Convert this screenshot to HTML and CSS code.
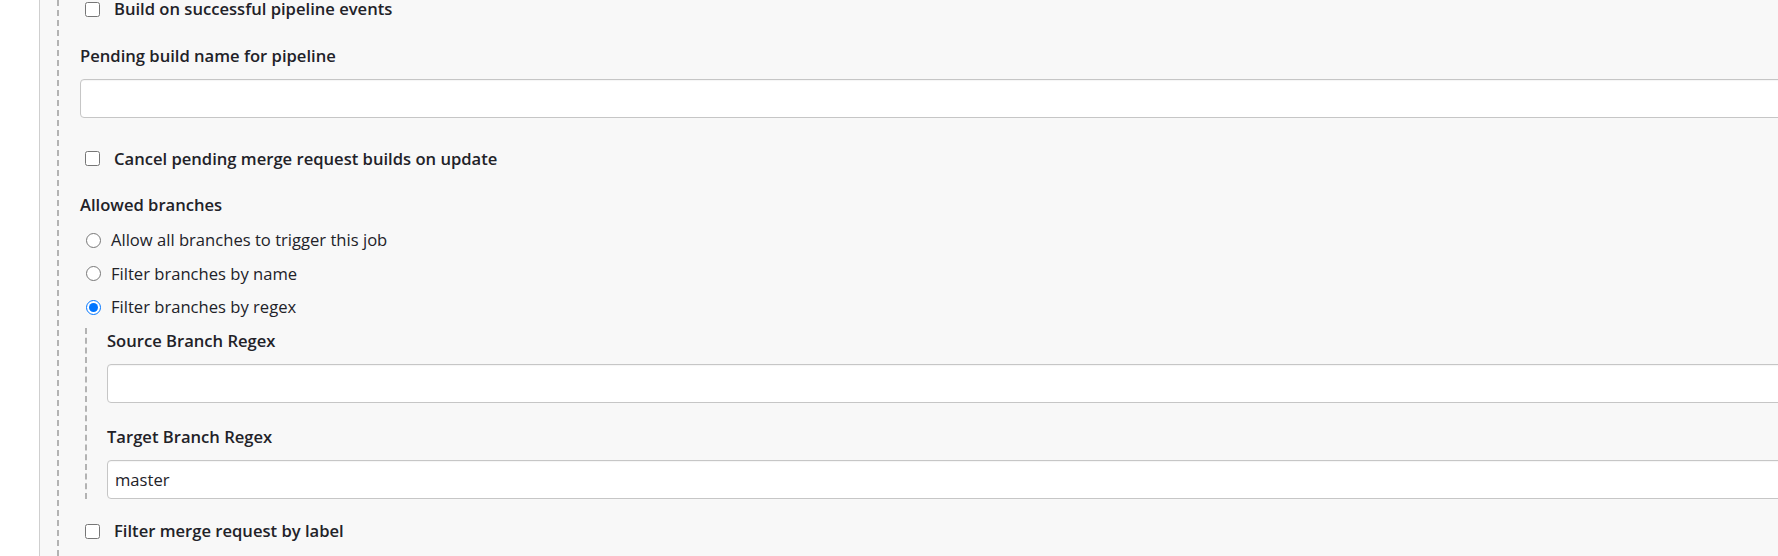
FILE: index.html
```html
<!DOCTYPE html>
<html lang="en">
<head>
<meta charset="utf-8">
<title>Build triggers</title>
<link rel="stylesheet" href="styles.css">
</head>
<body>
<div class="layout">
  <div class="gutter"></div>
  <main class="panel">
    <div class="section">
      <label class="check-row check-row-first">
        <input type="checkbox" class="check">
        <span class="check-text">Build on successful pipeline events</span>
      </label>

      <div class="field field-first">
        <div class="field-label">Pending build name for pipeline</div>
        <input type="text" class="text-input" value="">
      </div>

      <label class="check-row check-row-spaced">
        <input type="checkbox" class="check">
        <span class="check-text">Cancel pending merge request builds on update</span>
      </label>

      <div class="group">
        <div class="field-label group-label">Allowed branches</div>
        <div class="radios">
          <label class="radio-row">
            <input type="radio" name="branches" class="radio">
            <span>Allow all branches to trigger this job</span>
          </label>
          <label class="radio-row">
            <input type="radio" name="branches" class="radio">
            <span>Filter branches by name</span>
          </label>
          <label class="radio-row">
            <input type="radio" name="branches" class="radio" checked>
            <span>Filter branches by regex</span>
          </label>
        </div>
        <div class="nested">
          <div class="field">
            <div class="field-label">Source Branch Regex</div>
            <input type="text" class="text-input" value="">
          </div>
          <div class="field field-next">
            <div class="field-label">Target Branch Regex</div>
            <input type="text" class="text-input" value="master">
          </div>
        </div>
      </div>

      <label class="check-row check-row-last">
        <input type="checkbox" class="check">
        <span class="check-text">Filter merge request by label</span>
      </label>
    </div>
  </main>
</div>
</body>
</html>
```

FILE: styles.css
```css
html, body {
  margin: 0;
  padding: 0;
  background: #ffffff;
  overflow: hidden;
}

body {
  font-family: "Open Sans", "Noto Sans", "Liberation Sans", sans-serif;
  font-size: 16.6px;
  line-height: 24px;
  color: #222228;
  height: 556px;
}

.layout {
  display: flex;
  height: 556px;
}

.gutter {
  width: 39px;
  flex: none;
  background: #ffffff;
}

.panel {
  flex: 1;
  min-width: 0;
  background: #f8f8f8;
  border-left: 1px solid #cfcfcf;
  padding-left: 17px;
  overflow: hidden;
}

.section {
  border-left: 2px dashed #b3b3b3;
  padding-left: 21px;
  height: 556px;
  box-sizing: border-box;
}

.check-row {
  display: flex;
  align-items: center;
  height: 24px;
  font-weight: 600;
}

.check-row-first {
  height: 18px;
  line-height: 18px;
}

.check {
  width: 15px;
  height: 15px;
  margin: 0 14px 0 5px;
  flex: none;
}

.check-row-spaced {
  margin-top: 29px;
}

.check-row-last {
  margin-top: 20.5px;
}

.field-first {
  margin-top: 26px;
}

.field-next {
  margin-top: 22.5px;
}

.field-label {
  font-weight: 600;
  height: 24px;
  margin-bottom: 10.5px;
}

.text-input {
  display: block;
  box-sizing: border-box;
  width: calc(100% + 60px);
  height: 39px;
  margin: 0;
  padding: 0 7px;
  border: 1px solid #c6c6c6;
  border-radius: 4px;
  background: #ffffff;
  box-shadow: inset 0 1px 1px rgba(0, 0, 0, 0.04);
  font-family: inherit;
  font-size: 16.6px;
  color: #222228;
  outline: none;
}

.group {
  margin-top: 22px;
}

.group-label {
  margin-bottom: 11.5px;
}

.radios {
  display: flex;
  flex-direction: column;
  gap: 9.5px;
}

.radio-row {
  display: flex;
  align-items: center;
  height: 24px;
}

.radio {
  width: 15px;
  height: 15px;
  margin: 0 10px 0 6px;
  flex: none;
}

.nested {
  margin-top: 8.5px;
  margin-left: 5px;
  border-left: 2px dashed #b3b3b3;
  padding-left: 20px;
  padding-top: 1.5px;
}
```
